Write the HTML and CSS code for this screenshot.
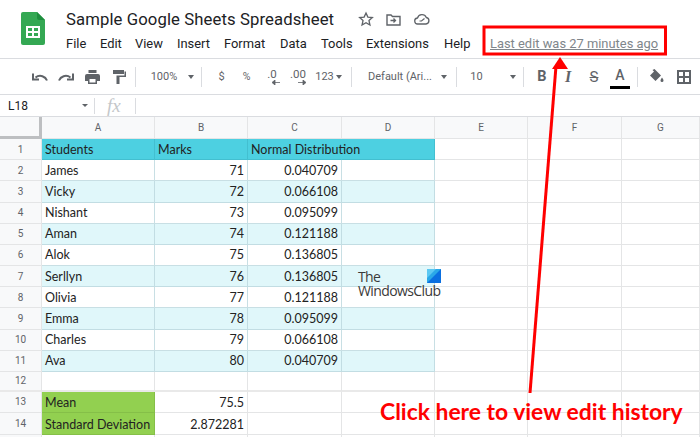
FILE: index.html
```html
<!DOCTYPE html>
<html lang="en">
<head>
<meta charset="utf-8">
<title>Sample Google Sheets Spreadsheet</title>
<link rel="stylesheet" href="styles.css">
</head>
<body>
<div class="page">
  <header class="top">
    <svg class="logo" width="24" height="33" viewBox="0 0 24 33"><path d="M2 0H16L24 8V31a2 2 0 0 1-2 2H2a2 2 0 0 1-2-2V2a2 2 0 0 1 2-2z" fill="#34a853"/><path d="M16 0L24 8H18a2 2 0 0 1-2-2z" fill="#1e8e3e"/><path d="M5 14H19V26H5zM7 16V19H11V16zM13 16V19H17V16zM7 21V24H11V21zM13 21V24H17V21z" fill="#fff" fill-rule="evenodd"/></svg>
    <div class="titles">
      <div class="titleline">
        <span class="doc">Sample Google Sheets Spreadsheet</span>
        <svg class="ic star" width="16" height="16" viewBox="0 0 24 24"><path d="M12 3l2.8 6.2 6.7.7-5 4.500 1.400 6.600L12 17.600 6.100 21l1.400-6.600-5-4.500 6.700-.7z" fill="none" stroke="#5f6368" stroke-width="2"/></svg>
        <svg class="ic folder" width="15" height="13" viewBox="0 0 15 13"><path d="M1 2h4l1.500 1.500H14V12H1z" fill="none" stroke="#5f6368" stroke-width="1.400"/><path d="M4.500 7.500h4.500M7.500 5.500l2 2-2 2" fill="none" stroke="#5f6368" stroke-width="1.300"/></svg>
        <svg class="ic cloud" width="16" height="12" viewBox="0 0 16 12"><path d="M4 11a3 3 0 0 1-.5-6A4.700 4.700 0 0 1 12.300 4.500 3.300 3.300 0 0 1 12 11z" fill="none" stroke="#5f6368" stroke-width="1.300"/><path d="M5.500 8L7.500 8 10.500 5.500" fill="none" stroke="#5f6368" stroke-width="1.200"/></svg>
      </div>
      <nav class="menu">
        <span class="mi mi-file">File</span><span class="mi mi-edit">Edit</span><span class="mi mi-view">View</span><span class="mi mi-insert">Insert</span><span class="mi mi-format">Format</span><span class="mi mi-data">Data</span><span class="mi mi-tools">Tools</span><span class="mi mi-ext">Extensions</span><span class="mi mi-help">Help</span>
        <a class="lastedit">Last edit was 27 minutes ago</a>
      </nav>
    </div>
  </header>

  <div class="toolbar">
    <span class="tb w26"><svg width="16" height="9" viewBox="0 0 16 9"><path d="M15 8.500C13.500 4.500 8 2 3.500 5.500M1 1.500V7.500H7" fill="none" stroke="#5f6368" stroke-width="2"/></svg></span>
    <span class="tb w26"><svg width="16" height="9" viewBox="0 0 16 9"><path d="M1 8.500C2.500 4.500 8 2 12.500 5.500M15 1.500V7.500H9" fill="none" stroke="#5f6368" stroke-width="2"/></svg></span>
    <span class="tb w27"><svg width="15" height="14" viewBox="0 0 15 14"><path d="M3.500 0H11.500V3H3.500zM2 4H13a2 2 0 0 1 2 2V11H12V14H3V11H0V6a2 2 0 0 1 2-2zM4.500 9V12.500H10.500V9z" fill="#5f6368" fill-rule="evenodd"/></svg></span>
    <span class="tb w26"><svg width="13" height="14" viewBox="0 0 13 14"><path d="M0 0H11V4H0zM11.500 1.500H13V7H6.500V14H3.500V5.500H11.500z" fill="#5f6368"/></svg></span>
    <i class="sep sep-a"></i>
    <span class="tb txt w-zoom">100%</span><span class="caret caret-zoom"></span>
    <i class="sep sep-b"></i>
    <span class="tb txt w-dollar">$</span>
    <span class="tb txt small w-pct">%</span>
    <span class="tb stack w-dec1">.0<svg width="8" height="5" viewBox="0 0 8 5"><path d="M8 2.500H2M3 0L0 2.500 3 5z" fill="#5f6368" stroke="#5f6368" stroke-width=".8"/></svg></span>
    <span class="tb stack w-dec2">.00<svg width="8" height="5" viewBox="0 0 8 5"><path d="M0 2.500H6M5 0L8 2.500 5 5z" fill="#5f6368" stroke="#5f6368" stroke-width=".8"/></svg></span>
    <span class="tb txt w-123">123</span><span class="caret caret-123"></span>
    <i class="sep sep-c"></i>
    <span class="tb txt w-font">Default (Ari...</span><span class="caret caret-font"></span>
    <i class="sep sep-d"></i>
    <span class="tb txt w-size">10</span><span class="caret caret-size"></span>
    <i class="sep sep-e"></i>
    <span class="tb fmt bold">B</span>
    <span class="tb fmt ital">I</span>
    <span class="tb fmt strike"><s>S</s></span>
    <span class="tb fmt colorA">A</span>
    <i class="sep sep-f"></i>
    <span class="tb w-fill"><svg width="15" height="15" viewBox="0 0 15 15"><path d="M5.500 0L12 6.500 6.500 12 1 6.500 5 2.500 3.500 1z" fill="#5f6368"/><path d="M13 8.500c1 1.500 1.500 2.200 1.500 3a1.500 1.500 0 0 1-3 0c0-.8.500-1.500 1.500-3z" fill="#5f6368"/></svg></span>
    <span class="tb w-border"><svg width="14" height="14" viewBox="0 0 14 14"><path d="M1 1H13V13H1zM7 1V13M1 7H13" fill="none" stroke="#5f6368" stroke-width="2"/></svg></span>
  </div>

  <div class="formula">
    <span class="namebox">L18</span><span class="caret caret-name"></span>
    <i class="fsep"></i><span class="fx">fx</span><i class="fsep"></i>
  </div>

  <div class="sheet">
    <div class="c corner"></div><div class="c hd">A</div><div class="c hd">B</div><div class="c hd">C</div><div class="c hd">D</div><div class="c hd">E</div><div class="c hd">F</div><div class="c hd">G</div>

    <div class="c rh">1</div><div class="c teal">Students</div><div class="c teal">Marks</div><div class="c teal over">Normal Distribution</div><div class="c teal"></div><div class="c"></div><div class="c"></div><div class="c"></div>
    <div class="c rh">2</div><div class="c b">James</div><div class="c b n">71</div><div class="c b n">0.040709</div><div class="c b"></div><div class="c"></div><div class="c"></div><div class="c"></div>
    <div class="c rh">3</div><div class="c a">Vicky</div><div class="c a n">72</div><div class="c a n">0.066108</div><div class="c a"></div><div class="c"></div><div class="c"></div><div class="c"></div>
    <div class="c rh">4</div><div class="c b">Nishant</div><div class="c b n">73</div><div class="c b n">0.095099</div><div class="c b"></div><div class="c"></div><div class="c"></div><div class="c"></div>
    <div class="c rh">5</div><div class="c a">Aman</div><div class="c a n">74</div><div class="c a n">0.121188</div><div class="c a"></div><div class="c"></div><div class="c"></div><div class="c"></div>
    <div class="c rh">6</div><div class="c b">Alok</div><div class="c b n">75</div><div class="c b n">0.136805</div><div class="c b"></div><div class="c"></div><div class="c"></div><div class="c"></div>
    <div class="c rh">7</div><div class="c a">Serllyn</div><div class="c a n">76</div><div class="c a n">0.136805</div><div class="c a"></div><div class="c"></div><div class="c"></div><div class="c"></div>
    <div class="c rh">8</div><div class="c b">Olivia</div><div class="c b n">77</div><div class="c b n">0.121188</div><div class="c b"></div><div class="c"></div><div class="c"></div><div class="c"></div>
    <div class="c rh">9</div><div class="c a">Emma</div><div class="c a n">78</div><div class="c a n">0.095099</div><div class="c a"></div><div class="c"></div><div class="c"></div><div class="c"></div>
    <div class="c rh">10</div><div class="c b">Charles</div><div class="c b n">79</div><div class="c b n">0.066108</div><div class="c b"></div><div class="c"></div><div class="c"></div><div class="c"></div>
    <div class="c rh">11</div><div class="c a">Ava</div><div class="c a n">80</div><div class="c a n">0.040709</div><div class="c a"></div><div class="c"></div><div class="c"></div><div class="c"></div>
    <div class="c rh thick">12</div><div class="c thick"></div><div class="c thick"></div><div class="c thick"></div><div class="c thick"></div><div class="c thick"></div><div class="c thick"></div><div class="c thick"></div>
    <div class="c rh">13</div><div class="c green low">Mean</div><div class="c n low">75.5</div><div class="c"></div><div class="c"></div><div class="c"></div><div class="c"></div><div class="c"></div>
    <div class="c rh">14</div><div class="c green low">Standard Deviation</div><div class="c n low">2.872281</div><div class="c"></div><div class="c"></div><div class="c"></div><div class="c"></div><div class="c"></div>
    <div class="c rh"></div><div class="c"></div><div class="c"></div><div class="c"></div><div class="c"></div><div class="c"></div><div class="c"></div><div class="c"></div>
  </div>

  <div class="watermark">
    <span class="wm-the">The</span>
    <span class="wm-club">WindowsClub</span>
    <svg class="wm-logo" width="14" height="14" viewBox="0 0 14 14"><rect width="14" height="14" fill="#2aa8e8"/><path d="M14 0V14H0z" fill="#0a6fe0"/><path d="M0 0H9L0 9z" fill="#5cc8f2"/></svg>
  </div>

  <svg class="annot" width="700" height="437" viewBox="0 0 700 437">
    <rect x="484" y="27" width="181.500" height="27" fill="none" stroke="#ff0000" stroke-width="3"/>
    <path d="M530 393L556 66" stroke="#ff0000" stroke-width="3" fill="none"/>
    <path d="M560 57L568 69H552z" fill="#ff0000"/>
  </svg>
  <div class="callout">Click here to view edit history</div>
</div>
</body>
</html>
```
FILE: styles.css
```css
* { box-sizing: border-box; }
html, body { margin: 0; padding: 0; background: #fff; }
.page {
  position: relative;
  width: 700px;
  height: 437px;
  overflow: hidden;
  font-family: Roboto, "Liberation Sans", sans-serif;
  color: #3c4043;
}

/* Header */
.top { display: flex; height: 59px; padding: 12px 0 0 21px; border-bottom: 1px solid #dadce0; }
.logo { flex: none; margin-right: 21px; }
.titles { display: flex; flex-direction: column; margin-top: -5px; }
.titleline { display: flex; align-items: center; height: 24px; }
.doc { font-size: 16.700px; color: #202124; letter-spacing: .1px; width: 292px; white-space: nowrap; }
.ic { flex: none; margin-right: 12px; }
.star { margin-right: 12px; }
.folder { margin-right: 13px; }
.menu { display: flex; align-items: center; height: 25px; font-size: 12.900px; color: #202124; white-space: nowrap; }
.mi { display: block; }
.mi-file { width: 34px; }
.mi-edit { width: 35px; }
.mi-view { width: 42px; }
.mi-insert { width: 47px; }
.mi-format { width: 56px; }
.mi-data { width: 41px; }
.mi-tools { width: 45px; }
.mi-ext { width: 78px; }
.mi-help { width: 46px; }
.lastedit { color: #80868b; text-decoration: underline; font-size: 12.900px; }

/* Toolbar */
.toolbar { display: flex; align-items: center; height: 36px; padding-left: 27px; border-bottom: 1px solid #dadce0; white-space: nowrap; }
.tb { display: flex; align-items: center; justify-content: center; flex: none; height: 20px; }
.w26 { width: 26px; }
.w27 { width: 27px; }
.txt { font-size: 11px; color: #5f6368; }
.small { font-size: 10.500px; }
.sep { display: block; flex: none; width: 1px; height: 20px; background: #dadce0; }
.caret { display: block; flex: none; width: 0; height: 0; border-left: 3.500px solid transparent; border-right: 3.500px solid transparent; border-top: 4px solid #5f6368; }
.sep-a { margin: 0 14px 0 3px; }
.w-zoom { width: 28px; }
.caret-zoom { margin: 0 7px 0 10px; }
.sep-b { margin-right: 11px; }
.w-dollar { width: 17px; }
.w-pct { width: 33px; }
.stack { position: relative; flex-direction: column; font-size: 11.500px; line-height: 12px; color: #5f6368; height: 24px; }
.stack svg { display: block; margin: 0 0 0 8px; }
.w-dec1 { width: 16px; margin-left: 1px; }
.w-dec2 { width: 20px; margin-left: 8px; }
.w-123 { width: 21px; margin-left: 6px; }
.caret-123 { margin: 0 9px 0 1px; }
.sep-c { margin-right: 15px; }
.w-font { width: 66px; }
.caret-font { margin: 0 9px 0 8px; }
.sep-d { margin-right: 13px; }
.w-size { width: 13px; }
.caret-size { margin: 0 7px 0 27px; }
.sep-e { margin-right: 5px; }
.fmt { width: 26px; font-size: 14.500px; color: #5f6368; }
.bold { font-weight: 700; }
.ital { font-style: italic; font-family: "Liberation Serif", serif; font-weight: 700; font-size: 16px; }
.strike { font-weight: 400; font-size: 15px; }
.colorA { height: 24px; width: 20px; margin-left: 3px; border-bottom: 3px solid #000; font-weight: 500; font-size: 14px; }
.sep-f { margin: 0 10px 0 7px; }
.w-fill { width: 17px; }
.w-border { width: 14px; margin-left: 12px; }

/* Formula bar */
.formula { display: flex; align-items: center; height: 22px; border-bottom: 1px solid #dadce0; }
.namebox { width: 82px; padding-left: 8px; font-size: 12px; color: #202124; }
.caret-name { margin-right: 6px; border-left-width: 3px; border-right-width: 3px; border-top-width: 3px; }
.fsep { display: block; flex: none; width: 1px; height: 16px; background: #dadce0; }
.fx { width: 40px; padding-left: 12px; font: italic 19px "Liberation Serif", serif; color: #c4c7ca; }

/* Grid */
.sheet {
  display: grid;
  grid-template-columns: 42px 113px 93px 94px 93px 93px 94px 78px;
  grid-template-rows: 22px repeat(11, 21.18px) 20px 21px 22px 4px;
  font-family: Lato, "Open Sans", sans-serif;
  font-size: 12.500px;
  color: #222;
}
.c { min-width: 0; padding: 0 3px; border-right: 1px solid #e4e5e6; border-bottom: 1px solid #e4e5e6; display: flex; align-items: center; white-space: nowrap; }
.corner { background: #f8f9fa; border-right: 3px solid #bdbfc1; border-bottom: 3px solid #bdbfc1; }
.hd, .rh { justify-content: center; background: #f8f9fa; font-family: Roboto, sans-serif; font-size: 10px; color: #5f6368; }
.teal { background: #4dd0e1; border-color: #43bfd0; }
.over { position: relative; z-index: 1; border-right-color: #4dd0e1; }
.a { background: #e0f7fa; border-color: #c2dde3; }
.b { background: #fff; border-color: #c8dfe4; }
.n { justify-content: flex-end; }
.green { background: #92d050; border-color: #85bf48; }
.low { padding-top: 2px; }
.thick { border-bottom: 2px solid #e9e9e9; }

/* Overlays */
.watermark { position: absolute; left: 358px; top: 270px; width: 84px; height: 30px; font-family: "Open Sans", sans-serif; font-size: 14px; color: #3a3a3a; letter-spacing: -.6px; line-height: 14px; z-index: 2; }
.wm-the, .wm-club { display: block; }
.wm-logo { position: absolute; right: 1px; top: -1px; }
.annot { position: absolute; left: 0; top: 0; pointer-events: none; z-index: 2; }
.callout { position: absolute; left: 380px; top: 397px; font-family: Lato, sans-serif; font-weight: 700; font-size: 22.900px; line-height: 28px; color: #ff0000; white-space: nowrap; z-index: 2; }
```
